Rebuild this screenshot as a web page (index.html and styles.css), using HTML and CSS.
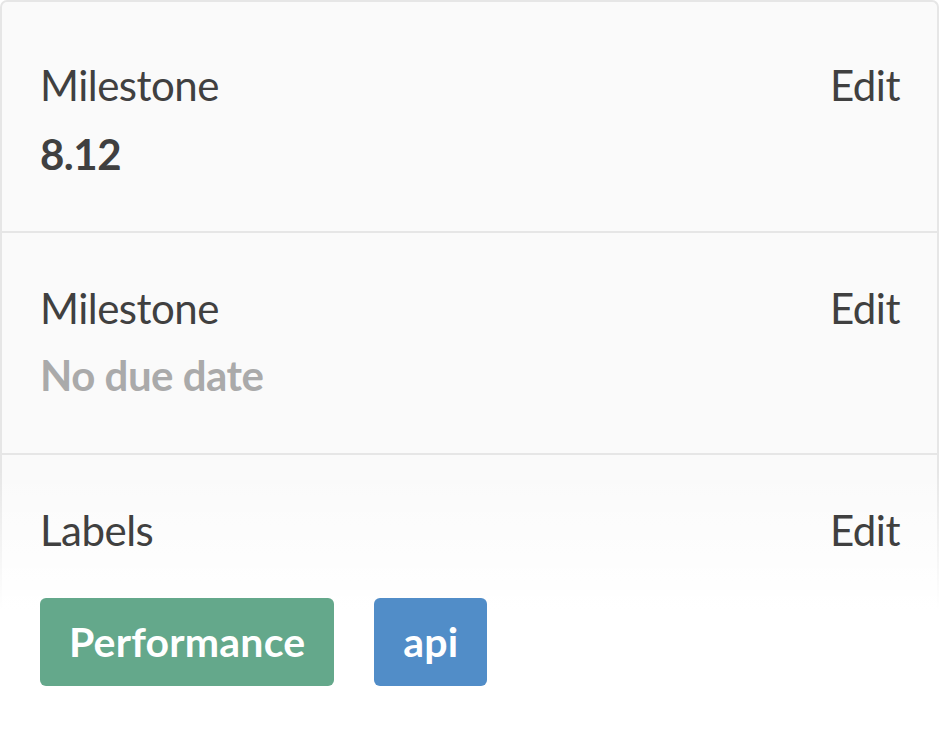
FILE: index.html
```html
<!DOCTYPE html>
<html>
<head>
<meta charset="utf-8">
<link rel="stylesheet" href="styles.css">
</head>
<body>
<div class="card">
  <section class="block block-first">
    <div class="head"><span class="title">Milestone</span><a class="edit">Edit</a></div>
    <div class="value bold">8.12</div>
  </section>
  <section class="block">
    <div class="head"><span class="title">Milestone</span><a class="edit">Edit</a></div>
    <div class="value muted">No due date</div>
  </section>
  <section class="block block-last">
    <div class="head"><span class="title">Labels</span><a class="edit">Edit</a></div>
    <div class="labels">
      <span class="label label-green">Performance</span>
      <span class="label label-blue">api</span>
    </div>
  </section>
  <div class="fade"></div>
</div>
</body>
</html>
```
FILE: styles.css
```css
html, body {
  margin: 0;
  padding: 0;
  background: #ffffff;
}
body {
  font-family: Lato, "Liberation Sans", sans-serif;
  color: #404040;
  width: 940px;
  height: 744px;
  overflow: hidden;
}
.card {
  position: relative;
  width: 935px;
  height: 760px;
  border: 2px solid #e6e6e6;
  border-bottom: none;
  border-radius: 7px 7px 0 0;
  background: #fafafa;
}
.block {
  padding: 50px 37px 52px 38px;
  border-top: 2px solid #e6e6e6;
}
.block-first {
  border-top: none;
  padding-top: 58px;
  padding-bottom: 51px;
}
.block-last .head,
.block-last .labels {
  position: relative;
  z-index: 2;
}
.head {
  display: flex;
  justify-content: space-between;
  align-items: baseline;
  font-size: 42px;
  line-height: 1.2;
  letter-spacing: -0.5px;
}
.edit {
  color: #404040;
}
.value {
  font-size: 42px;
  line-height: 1.2;
  margin-top: 17px;
  letter-spacing: -0.5px;
}
.bold {
  font-weight: 700;
  margin-top: 19px;
}
.muted {
  color: #aaaaaa;
  font-weight: 700;
}
.labels {
  display: flex;
  gap: 40px;
  margin-top: 43px;
}
.label {
  display: inline-block;
  height: 88px;
  line-height: 88px;
  padding: 0 29px;
  border-radius: 6px;
  color: #ffffff;
  font-size: 41px;
  font-weight: 700;
  letter-spacing: 0.2px;
}
.label-green {
  background: #64a88b;
}
.label-blue {
  background: #518dc8;
}
.fade {
  position: absolute;
  left: -3px;
  right: -3px;
  top: 468px;
  bottom: 0;
  z-index: 1;
  background: linear-gradient(to bottom, rgba(255,255,255,0) 0px, #ffffff 140px);
}
```
